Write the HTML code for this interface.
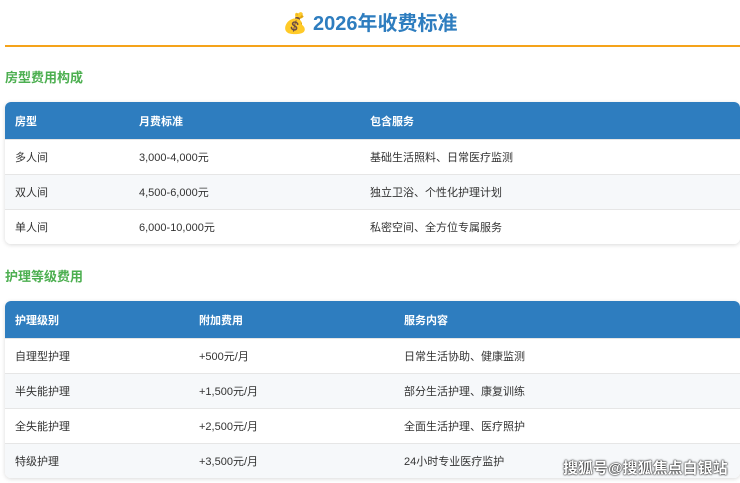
<!DOCTYPE html>
<html><head><meta charset="utf-8"><style>
*{margin:0;padding:0;box-sizing:border-box}
body{width:740px;height:483px;background:#fff;font-family:"Liberation Sans","Noto Sans CJK SC",sans-serif;position:relative;overflow:hidden;color:#333}
.title{position:absolute;top:9px;left:0;width:740px;text-align:center;font-size:20px;font-weight:bold;color:#2e7dbf;line-height:30px}
.line{position:absolute;top:45px;left:5px;width:735px;height:2px;background:#f5a31a}
.h{position:absolute;left:5px;font-size:13px;font-weight:bold;color:#4caf50}
.tbl{position:absolute;left:5px;width:735px;border-radius:6px;overflow:hidden;box-shadow:0 1px 4px rgba(0,0,0,.15)}
.hd{background:#2e7dbf;color:#fff;font-weight:bold;height:37px;position:relative;font-size:11px}
.r{height:35px;position:relative;font-size:11px;border-top:1px solid #e6e6e6;background:#fff}
.r.g{background:#f6f8fa}
.tbl span{position:absolute;top:50%;transform:translateY(-50%)}
.wm{position:absolute;left:563px;top:457px;font-size:15px;font-weight:bold;color:#fff;text-shadow:0 0 2px #000,0 0 1px #000}
</style></head><body>
<div class="title">💰 2026年收费标准</div>
<div class="line"></div>
<div class="h" style="top:67px">房型费用构成</div>
<div class="tbl" style="top:102px">
<div class="hd"><span style="left:10px">房型</span><span style="left:134px">月费标准</span><span style="left:365px">包含服务</span></div>
<div class="r"><span style="left:10px">多人间</span><span style="left:134px">3,000-4,000元</span><span style="left:365px">基础生活照料、日常医疗监测</span></div>
<div class="r g"><span style="left:10px">双人间</span><span style="left:134px">4,500-6,000元</span><span style="left:365px">独立卫浴、个性化护理计划</span></div>
<div class="r"><span style="left:10px">单人间</span><span style="left:134px">6,000-10,000元</span><span style="left:365px">私密空间、全方位专属服务</span></div>
</div>
<div class="h" style="top:266px">护理等级费用</div>
<div class="tbl" style="top:301px">
<div class="hd"><span style="left:10px">护理级别</span><span style="left:194px">附加费用</span><span style="left:399px">服务内容</span></div>
<div class="r"><span style="left:10px">自理型护理</span><span style="left:194px">+500元/月</span><span style="left:399px">日常生活协助、健康监测</span></div>
<div class="r g"><span style="left:10px">半失能护理</span><span style="left:194px">+1,500元/月</span><span style="left:399px">部分生活护理、康复训练</span></div>
<div class="r"><span style="left:10px">全失能护理</span><span style="left:194px">+2,500元/月</span><span style="left:399px">全面生活护理、医疗照护</span></div>
<div class="r g"><span style="left:10px">特级护理</span><span style="left:194px">+3,500元/月</span><span style="left:399px">24小时专业医疗监护</span></div>
</div>
<div class="wm">搜狐号@搜狐焦点白银站</div>
</body></html>
